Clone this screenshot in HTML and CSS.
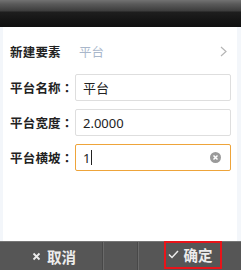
FILE: index.html
```html
<!DOCTYPE html>
<html>
<head>
<meta charset="utf-8">
<link rel="stylesheet" href="styles.css">
</head>
<body>
<div class="app">
  <div class="topbar"></div>
  <div class="panel">
    <div class="row first">
      <span class="label">新建要素</span>
      <span class="val">平台</span>
      <svg class="chev" width="7" height="11" viewBox="0 0 7 11"><path d="M1 1 L6 5.5 L1 10" fill="none" stroke="#b5b5b5" stroke-width="1.2"/></svg>
    </div>
    <div class="row">
      <span class="label">平台名称<span class="colon">：</span></span>
      <div class="input cjk">平台</div>
    </div>
    <div class="row">
      <span class="label">平台宽度<span class="colon">：</span></span>
      <div class="input">2.0000</div>
    </div>
    <div class="row">
      <span class="label">平台横坡<span class="colon">：</span></span>
      <div class="input focus"><span>1</span><span class="caret"></span>
        <svg class="clear" width="11" height="11" viewBox="0 0 11 11"><circle cx="5.5" cy="5.5" r="5.5" fill="#9a9a9a"/><path d="M3.5 3.5 L7.5 7.5 M7.5 3.5 L3.5 7.5" stroke="#fff" stroke-width="1.5"/></svg>
      </div>
    </div>
  </div>
  <div class="footer">
    <div class="btn cancel"><svg width="9" height="9" viewBox="0 0 9 9"><path d="M1.5 1.5 L7.5 7.5 M7.5 1.5 L1.5 7.5" stroke="#ececec" stroke-width="1.8"/></svg><span>取消</span></div>
    <div class="btn mid"></div>
    <div class="btn ok"><span class="mark"><svg width="11" height="9" viewBox="0 0 11 9"><path d="M1 4.5 L4 7.5 L10 1" fill="none" stroke="#ececec" stroke-width="1.5"/></svg><span>确定</span></span></div>
  </div>
</div>
</body>
</html>
```

FILE: styles.css
```css
html, body {
  margin: 0;
  padding: 0;
}
body {
  width: 241px;
  height: 270px;
  overflow: hidden;
  background: #f3f6fa;
  font-family: "Noto Sans CJK SC", "Noto Sans", sans-serif;
}
.app {
  display: flex;
  flex-direction: column;
  height: 270px;
}
.topbar {
  height: 27px;
  flex: none;
  background: linear-gradient(#727272 0, #5a5a5a 4px, #3c3c3c 11px, #1e1e1e 12px, #151515 20px, #101010 27px);
}
.panel {
  flex: 1;
  background: #fff;
  margin: 0 4px 0 3px;
  padding: 9px 0 0 0;
  display: flex;
  flex-direction: column;
  gap: 8px;
}
.row {
  display: flex;
  align-items: center;
  height: 27px;
  padding-left: 7px;
}
.row.first {
  height: 30px;
  margin-bottom: 0;
}
.label {
  width: 65px;
  flex: none;
  font-size: 12.5px;
  font-weight: bold;
  color: #222;
  letter-spacing: 0.2px;
}
.colon {
  font-family: "Noto Sans CJK TC", sans-serif;
}
.val {
  flex: 1;
  font-size: 12.5px;
  color: #a9b7cb;
  padding-left: 4px;
}
.chev {
  margin-right: 10px;
}
.input {
  flex: none;
  width: 147px;
  height: 25px;
  border: 1px solid #dedede;
  border-radius: 2px;
  padding-left: 7px;
  display: flex;
  align-items: center;
  font-size: 13px;
  color: #222;
  font-family: "Noto Sans", sans-serif;
}
.input.cjk {
  font-family: "Noto Sans CJK SC", sans-serif;
}
.input.focus {
  border-color: #eea43a;
}
.caret {
  width: 1px;
  height: 15px;
  background: #222;
  margin-left: 1px;
}
.clear {
  margin-left: auto;
  margin-right: 9px;
}
.footer {
  height: 29px;
  flex: none;
  display: flex;
  background: #565656;
  border-top: 1px solid #767676;
  box-sizing: border-box;
}
.btn {
  display: flex;
  align-items: center;
  justify-content: center;
  color: #ececec;
  font-size: 14.5px;
  font-weight: bold;
}
.cancel {
  width: 103px;
  gap: 6px;
  padding-left: 6px;
  box-sizing: border-box;
  border-right: 1px solid #484848;
  box-shadow: 1px 0 0 #6a6a6a;
}
.mid {
  width: 34px;
  border-right: 1px solid #484848;
  box-shadow: 1px 0 0 #6a6a6a;
}
.ok {
  flex: 1;
  padding-left: 6px;
}
.mark {
  display: flex;
  align-items: center;
  gap: 5px;
  border: 2px solid #e8141a;
  height: 24px;
  padding: 0 7px 0 2px;
  margin-top: -3px;
}
```
